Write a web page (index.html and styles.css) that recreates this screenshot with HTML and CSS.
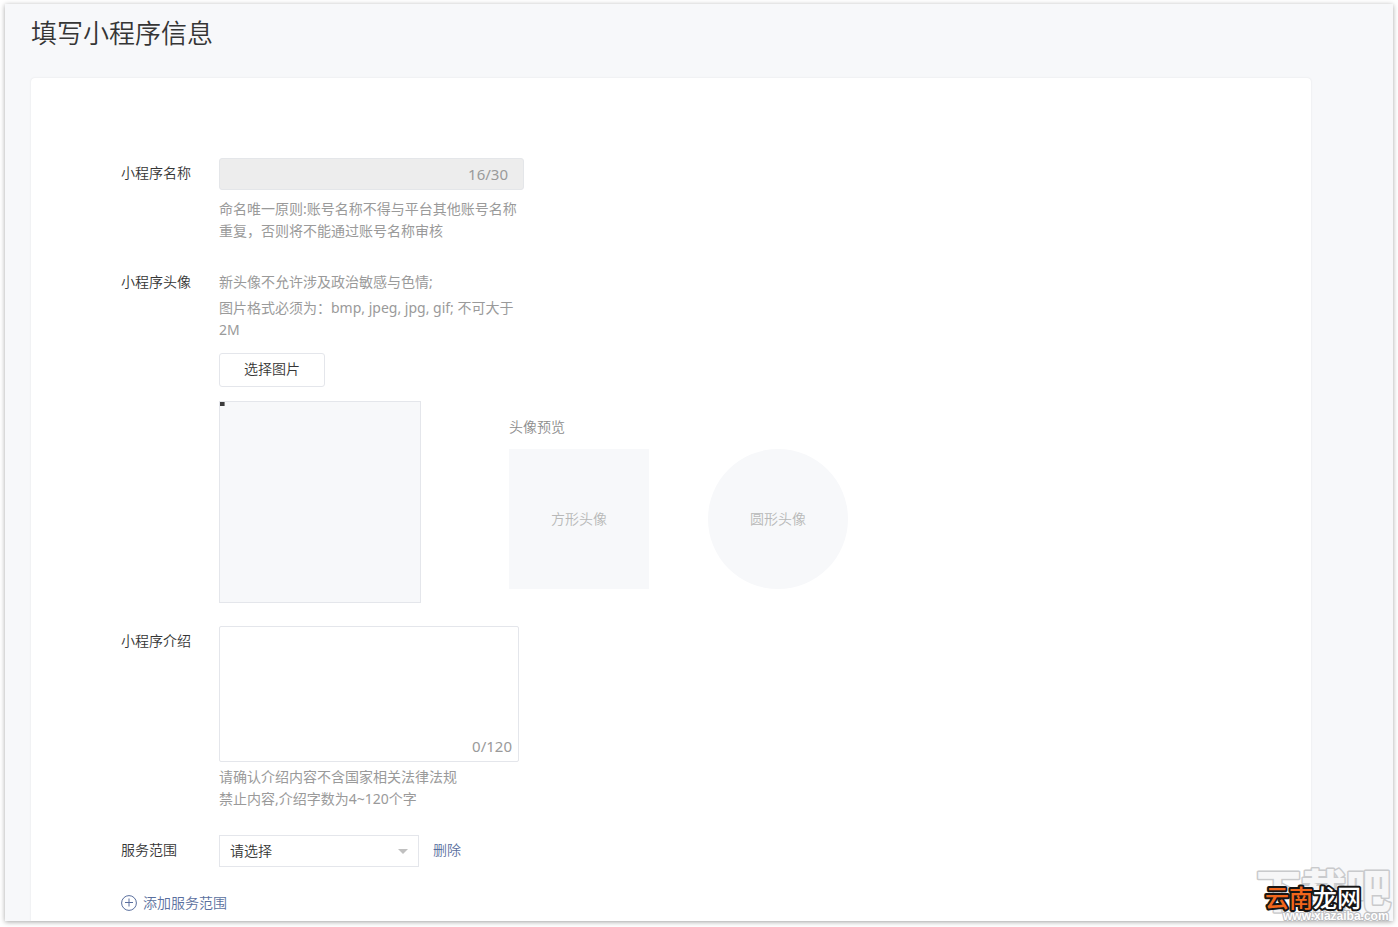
FILE: index.html
```html
<!DOCTYPE html>
<html lang="zh-CN">
<head>
<meta charset="utf-8">
<meta name="viewport" content="width=device-width, initial-scale=1">
<title>填写小程序信息</title>
<link rel="stylesheet" href="styles.css">
</head>
<body>
<div class="frame">
  <h1 class="title">填写小程序信息</h1>
  <form class="card">
    <div class="row">
      <label class="label" for="name">小程序名称</label>
      <div class="field">
        <div class="name-box">
          <input class="name-input" id="name" type="text" disabled>
          <span class="count">16/30</span>
        </div>
        <p class="hint hint-name">命名唯一原则:账号名称不得与平台其他账号名称重复，否则将不能通过账号名称审核</p>
      </div>
    </div>

    <div class="row row-avatar">
      <span class="label">小程序头像</span>
      <div class="field">
        <div class="rules">
          <p class="hint">新头像不允许涉及政治敏感与色情;</p>
          <p class="hint">图片格式必须为：bmp, jpeg, jpg, gif; 不可大于2M</p>
        </div>
        <button class="pick" type="button">选择图片</button>
        <div class="avatars">
          <div class="crop"><div class="crop-handle"></div></div>
          <div class="preview">
            <div class="preview-title">头像预览</div>
            <div class="preview-list">
              <div class="thumb">方形头像</div>
              <div class="thumb thumb-round">圆形头像</div>
            </div>
          </div>
        </div>
      </div>
    </div>

    <div class="row">
      <label class="label" for="intro">小程序介绍</label>
      <div class="field">
        <div class="intro-box">
          <textarea class="intro" id="intro"></textarea>
          <span class="count count-intro">0/120</span>
        </div>
        <p class="hint hint-intro">请确认介绍内容不含国家相关法律法规<br>禁止内容,介绍字数为4~120个字</p>
      </div>
    </div>

    <div class="row">
      <label class="label" for="scope">服务范围</label>
      <div class="field scope-line">
        <div class="select-box">
          <select class="scope" id="scope"><option>请选择</option></select>
          <svg class="arrow" width="10" height="5" viewBox="0 0 10 5" aria-hidden="true"><path d="M0 0h10L5 5z" fill="#c0c0c0"/></svg>
        </div>
        <a class="link" href="#">删除</a>
      </div>
    </div>

    <a class="link add" href="#">
      <svg width="16" height="16" viewBox="0 0 16 16" fill="none" stroke="#5a6f9e" aria-hidden="true"><circle cx="8" cy="8" r="7.4"/><path d="M4 7.5h8M8 3.5v8"/></svg>
      添加服务范围
    </a>
  </form>
</div>

<svg class="watermark" width="140" height="66" viewBox="0 0 140 66">
  <text class="wm-back" x="0" y="47">下载吧</text>
  <text class="wm-url" x="27" y="59">www.xiazaiba.com</text>
  <text class="wm-front" x="9" y="46"><tspan class="wm-hot">云南</tspan>龙网</text>
</svg>
</body>
</html>
```

FILE: styles.css
```css
* { box-sizing: border-box; }

body {
  margin: 0;
  padding: 4px 5px 6px;
  min-height: 100vh;
  display: flex;
  background: #fff;
  color: #353535;
  font: 350 14px/22px "Noto Sans", "Noto Sans CJK SC", sans-serif;
}

h1, p { margin: 0; }

.frame {
  flex: 1;
  display: flex;
  flex-direction: column;
  padding: 8px 82px 0 26px;
  background: #f7f8fa;
  box-shadow: 0 1px 5px rgba(0, 0, 0, 0.35);
}

.title {
  margin-bottom: 26px;
  font-family: "Noto Sans CJK SC", sans-serif;
  font-size: 26px;
  line-height: 40px;
  font-weight: 350;
}

.card {
  flex: 1;
  padding: 80px 90px 4px;
  background: #fff;
  border-radius: 4px 4px 0 0;
  box-shadow: 0 0 2px rgba(0, 0, 0, 0.1);
}

.row {
  display: grid;
  grid-template-columns: 98px 1fr;
  margin-bottom: 25px;
}

.row-avatar { margin-bottom: 23px; }

.label { padding-top: 4px; }

.hint, .count {
  color: #9a9a9a;
  font-weight: 400;
}
.hint { max-width: 300px; }
.count { font-size: 15px; }

.name-box {
  display: flex;
  align-items: center;
  max-width: 305px;
  height: 32px;
  padding-right: 15px;
  background: #ededed;
  border: 1px solid #e4e6e9;
  border-radius: 3px;
}

.name-input {
  flex: 1;
  min-width: 0;
  height: 30px;
  padding: 0 10px;
  border: 0;
  background: transparent;
  font: inherit;
}

.hint-name { margin-top: 8px; }

.rules {
  display: grid;
  gap: 4px;
  padding-top: 4px;
}

.pick {
  display: block;
  width: 106px;
  height: 34px;
  margin: 12px 0 14px;
  padding: 0 0 2px;
  background: #fff;
  border: 1px solid #e4e6eb;
  border-radius: 3px;
  color: inherit;
  font: inherit;
}

.avatars {
  display: flex;
  gap: 88px;
}

.crop {
  width: 202px;
  height: 202px;
  background: #f7f8fa;
  border: 1px solid #e4e6eb;
}

.crop-handle {
  width: 5px;
  height: 4px;
  background: #3c3c3c;
  border-right: 1px solid #888;
}

.preview { padding-top: 15px; }

.preview-title {
  margin-bottom: 11px;
  color: #8d8d8d;
}

.preview-list {
  display: flex;
  gap: 59px;
}

.thumb {
  display: grid;
  place-items: center;
  width: 140px;
  height: 140px;
  background: #f7f8fa;
  color: #b8b8b8;
}

.thumb-round { border-radius: 50%; }

.intro-box {
  position: relative;
  max-width: 300px;
}

.intro {
  display: block;
  width: 100%;
  height: 136px;
  padding: 8px 10px;
  border: 1px solid #e4e6eb;
  border-radius: 2px;
  resize: none;
  font: inherit;
}

.count-intro {
  position: absolute;
  right: 7px;
  bottom: 5px;
}

.hint-intro { margin-top: 4px; }

.scope-line {
  display: flex;
  gap: 14px;
}

.select-box {
  position: relative;
  width: 200px;
}

.scope {
  display: block;
  appearance: none;
  width: 100%;
  height: 32px;
  padding: 0 28px 0 10px;
  background: #fff;
  border: 1px solid #e4e6eb;
  border-radius: 0;
  color: inherit;
  font: inherit;
}

.arrow {
  position: absolute;
  right: 11px;
  top: 14px;
  pointer-events: none;
}

.link {
  padding-top: 4px;
  color: #5a6f9e;
  text-decoration: none;
}

.add {
  display: inline-flex;
  align-items: center;
  gap: 6px;
  padding: 0;
}

.watermark {
  position: absolute;
  right: 2px;
  bottom: 0;
  overflow: visible;
  font-family: "Noto Sans CJK SC", sans-serif;
  font-weight: 700;
  paint-order: stroke;
  stroke-linejoin: round;
}

.wm-back {
  font-size: 45px;
  font-weight: 900;
  fill: #f6f6f7;
  stroke: #c9cacc;
  stroke-width: 3px;
}

.wm-url {
  font-family: "Liberation Sans", sans-serif;
  font-size: 12px;
  fill: #fff;
  stroke: #bcbdbf;
  stroke-width: 2px;
}

.wm-front {
  font-size: 24px;
  font-weight: 500;
  fill: #fff;
  stroke: #161616;
  stroke-width: 4px;
}

.wm-hot { fill: #f2661b; }
```
